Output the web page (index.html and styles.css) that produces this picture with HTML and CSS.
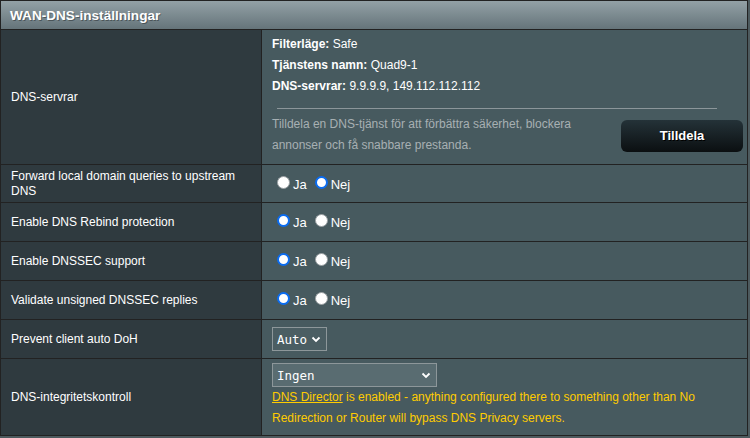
FILE: index.html
```html
<!DOCTYPE html>
<html lang="sv">
<head>
<meta charset="utf-8">
<title>WAN-DNS-inställningar</title>
<link rel="stylesheet" href="styles.css">
</head>
<body>
<div class="form">
  <div class="head">WAN-DNS-inställningar</div>

  <div class="th r1">DNS-servrar</div>
  <div class="td r1 dns">
    <div class="info"><b>Filterläge:</b> Safe</div>
    <div class="info"><b>Tjänstens namn:</b> Quad9-1</div>
    <div class="info"><b>DNS-servrar:</b> 9.9.9.9, 149.112.112.112</div>
    <div class="divider"></div>
    <div class="assign">
      <div class="hint">Tilldela en DNS-tjänst för att förbättra säkerhet, blockera annonser och få snabbare prestanda.</div>
      <button class="btn">Tilldela</button>
    </div>
  </div>

  <div class="th r2">Forward local domain queries to upstream DNS</div>
  <div class="td r2"><div class="radios"><span class="radio"></span><span class="rl">Ja</span><span class="radio on"></span><span class="rl">Nej</span></div></div>

  <div class="th">Enable DNS Rebind protection</div>
  <div class="td"><div class="radios"><span class="radio on"></span><span class="rl">Ja</span><span class="radio"></span><span class="rl">Nej</span></div></div>

  <div class="th">Enable DNSSEC support</div>
  <div class="td"><div class="radios"><span class="radio on"></span><span class="rl">Ja</span><span class="radio"></span><span class="rl">Nej</span></div></div>

  <div class="th">Validate unsigned DNSSEC replies</div>
  <div class="td"><div class="radios"><span class="radio on"></span><span class="rl">Ja</span><span class="radio"></span><span class="rl">Nej</span></div></div>

  <div class="th">Prevent client auto DoH</div>
  <div class="td"><div class="select small"><span>Auto</span><svg width="10" height="7" viewBox="0 0 10 7"><path d="M1.5 1.5 L5 5 L8.5 1.5" fill="none" stroke="#fff" stroke-width="1.8"/></svg></div></div>

  <div class="th r7">DNS-integritetskontroll</div>
  <div class="td r7 integ">
    <div class="select wide"><span>Ingen</span><svg width="10" height="7" viewBox="0 0 10 7"><path d="M1.5 1.5 L5 5 L8.5 1.5" fill="none" stroke="#fff" stroke-width="1.8"/></svg></div>
    <p class="warn"><u>DNS Director</u> is enabled - anything configured there to something other than No Redirection or Router will bypass DNS Privacy servers.</p>
  </div>
</div>
</body>
</html>
```

FILE: styles.css
```css
html, body {
  margin: 0;
  padding: 0;
  background: #4d5a5e;
}
body {
  font-family: "Liberation Sans", Arial, sans-serif;
  font-size: 12px;
  color: #fff;
}
.form {
  width: 748px;
  box-sizing: border-box;
  background: #222;
  padding: 1px;
  display: grid;
  grid-template-columns: 260px 485px;
  grid-template-rows: 28px 134px 37px 38px 38px 38px 38px 76px;
  gap: 1px;
}
.head {
  grid-column: 1 / 3;
  background: linear-gradient(#93a1a6, #65747a);
  font-weight: bold;
  font-size: 13.6px;
  padding-left: 9px;
  display: flex;
  align-items: center;
  text-shadow: 1px 1px 0 rgba(0,0,0,0.35);
}
.th {
  background: #2f3a3f;
  padding-left: 10px;
  padding-right: 8px;
  display: flex;
  align-items: center;
  line-height: 15px;
}
.td {
  background: #475a5f;
  padding: 0 10px;
  display: flex;
  align-items: center;
}
.dns {
  flex-direction: column;
  align-items: stretch;
  justify-content: flex-start;
  padding-top: 4px;
}
.info {
  line-height: 21px;
}
.divider {
  height: 1px;
  background: #8c969a;
  margin: 11px 20px 5px 5px;
}
.assign {
  display: flex;
  align-items: center;
}
.hint {
  flex: 1;
  color: #a7b0b3;
  line-height: 21px;
  padding-right: 14px;
}
.btn {
  width: 122px;
  height: 32px;
  margin-right: -6px;
  margin-top: 1px;
  border: none;
  border-radius: 6px;
  background: linear-gradient(#243238, #0b0f11);
  color: #fff;
  font-family: "Liberation Sans", Arial, sans-serif;
  font-weight: bold;
  font-size: 13px;
  text-shadow: 1px 1px 0 #000;
}
.radios {
  display: flex;
  align-items: center;
  padding-bottom: 3px;
}
.radio {
  width: 13px;
  height: 13px;
  box-sizing: border-box;
  border-radius: 50%;
  background: #fff;
  border: 1px solid #9aa0a3;
  margin: 0 3px 0 5px;
}
.radio.on {
  border: 2.5px solid #0b6cf0;
  background: #fff;
}
.rl {
  font-size: 13px;
  margin-top: 4px;
}
.rl + .radio {
  margin-left: 8px;
}
.select {
  height: 24px;
  box-sizing: border-box;
  border: 1px solid #8d979a;
  display: flex;
  align-items: center;
  justify-content: space-between;
  font-family: "DejaVu Sans Mono", "Liberation Mono", monospace;
  font-size: 12.5px;
  color: #fff;
  padding: 0 5px 0 4px;
}
.select.small {
  width: 55px;
  background: #4b5e63;
}
.select.wide {
  width: 165px;
  background: #596c71;
}
.integ {
  flex-direction: column;
  align-items: flex-start;
  justify-content: flex-start;
  padding-top: 4px;
}
.warn {
  margin: 0;
  color: #ffcc00;
  line-height: 21px;
  padding-right: 4px;
}
```
